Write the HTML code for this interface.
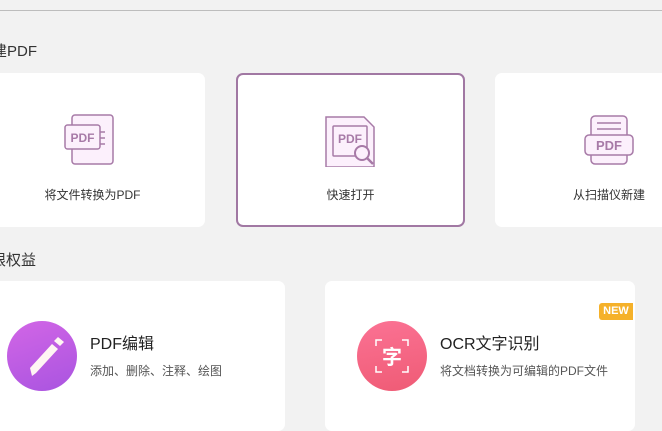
<!DOCTYPE html>
<html><head><meta charset="utf-8"><style>
*{margin:0;padding:0;box-sizing:border-box}
body{width:662px;height:411px;background:#f2f2f2;position:relative;overflow:hidden;font-family:"Liberation Sans","Noto Sans CJK SC",sans-serif;color:#333}
.abs{position:absolute}
.line{left:0;top:10px;width:662px;height:1px;background:#bdbdbd}
.h{font-size:15px;color:#333;white-space:nowrap}
.card{background:#fff;border-radius:7px}
.lbl{font-size:12px;color:#333;white-space:nowrap;text-align:center;width:100%;left:0}
.t{font-size:16px;color:#222;white-space:nowrap}
.s{font-size:12px;color:#555;white-space:nowrap}
</style></head><body>
<div class="abs line"></div>
<div class="abs h" style="left:-8px;top:40px">建PDF</div>

<div class="abs card" style="left:-20px;top:73px;width:225px;height:154px">
  <svg class="abs" style="left:84px;top:41px" width="54" height="54" viewBox="0 0 54 54">
    <rect x="8" y="1" width="41" height="49" rx="3" fill="#fcf0fc" stroke="#a77aa7" stroke-width="1.5"/>
    <path d="M35 18h6M35 24h6M35 30h6" stroke="#a77aa7" stroke-width="1.5"/>
    <rect x="1" y="11" width="35" height="24" rx="2.5" fill="#fcf0fc" stroke="#a77aa7" stroke-width="1.5"/>
    <text x="18.5" y="28" font-size="12" font-weight="bold" fill="#a77aa7" text-anchor="middle" font-family="Liberation Sans">PDF</text>
  </svg>
  <div class="abs lbl" style="top:113px">将文件转换为PDF</div>
</div>

<div class="abs card" style="left:236px;top:73px;width:229px;height:154px;border:2px solid #a178a3">
  <svg class="abs" style="left:86px;top:40px" width="52" height="52" viewBox="0 0 52 52">
    <path d="M2 2h38l10 10v40H2z" fill="#fcf0fc" stroke="#a77aa7" stroke-width="1.5"/>
    <rect x="9" y="11" width="34" height="30" rx="1" fill="#fcf0fc" stroke="#a77aa7" stroke-width="1.5"/>
    <text x="26" y="28" font-size="12" font-weight="bold" fill="#a77aa7" text-anchor="middle" font-family="Liberation Sans">PDF</text>
    <circle cx="38" cy="38" r="7" fill="#fcf0fc" stroke="#a77aa7" stroke-width="2"/>
    <path d="M43 43l6 6" stroke="#a77aa7" stroke-width="2.5"/>
  </svg>
  <div class="abs lbl" style="top:111px">快速打开</div>
</div>

<div class="abs card" style="left:495px;top:73px;width:200px;height:154px">
  <svg class="abs" style="left:88px;top:42px" width="52" height="52" viewBox="0 0 52 52">
    <rect x="8" y="1" width="36" height="48" rx="4" fill="#fcf0fc" stroke="#a77aa7" stroke-width="1.5"/>
    <path d="M14 8h24M14 14h24" stroke="#a77aa7" stroke-width="1.5"/>
    <rect x="2" y="20" width="48" height="20" rx="4" fill="#fcf0fc" stroke="#a77aa7" stroke-width="1.5"/>
    <text x="26" y="35" font-size="13" font-weight="bold" fill="#a77aa7" text-anchor="middle" font-family="Liberation Sans">PDF</text>
  </svg>
  <div class="abs" style="left:78px;top:113px;font-size:12px;white-space:nowrap">从扫描仪新建</div>
</div>

<div class="abs h" style="left:-9px;top:249px">限权益</div>

<div class="abs card" style="left:-20px;top:281px;width:305px;height:150px"></div>
<div class="abs" style="left:7px;top:321px;width:70px;height:70px;border-radius:50%;background:linear-gradient(160deg,#d266e6,#a954e0)"></div>
<svg class="abs" style="left:7px;top:321px" width="70" height="70" viewBox="0 0 70 70">
  <path d="M25 55l-2-8 22-24 6 5-22 24z" fill="#fff5f3"/>
  <path d="M47 20l4-4 6 5-4 4z" fill="#fff5f3"/>
</svg>
<div class="abs t" style="left:90px;top:330px">PDF编辑</div>
<div class="abs s" style="left:90px;top:362px">添加、删除、注释、绘图</div>

<div class="abs card" style="left:325px;top:281px;width:310px;height:150px"></div>
<div class="abs" style="left:599px;top:303px;width:34px;height:17px;background:#f5b12a;border-radius:3px 0 0 3px;color:#fff;font-size:11px;font-weight:bold;text-align:center;line-height:17px">NEW</div>
<div class="abs" style="left:357px;top:321px;width:70px;height:70px;border-radius:50%;background:linear-gradient(170deg,#fb7294,#ef5b75)"></div>
<svg class="abs" style="left:357px;top:321px" width="70" height="70" viewBox="0 0 70 70">
  <path d="M19 25v-6h6M45 19h6v6M51 45v6h-6M25 51h-6v-6" stroke="#fff" stroke-width="1.5" fill="none"/>
  <text x="35" y="43" font-size="20" font-weight="bold" fill="#fff" text-anchor="middle" font-family="Noto Sans CJK SC,sans-serif">字</text>
</svg>
<div class="abs t" style="left:440px;top:330px">OCR文字识别</div>
<div class="abs s" style="left:440px;top:362px">将文档转换为可编辑的PDF文件</div>
</body></html>
